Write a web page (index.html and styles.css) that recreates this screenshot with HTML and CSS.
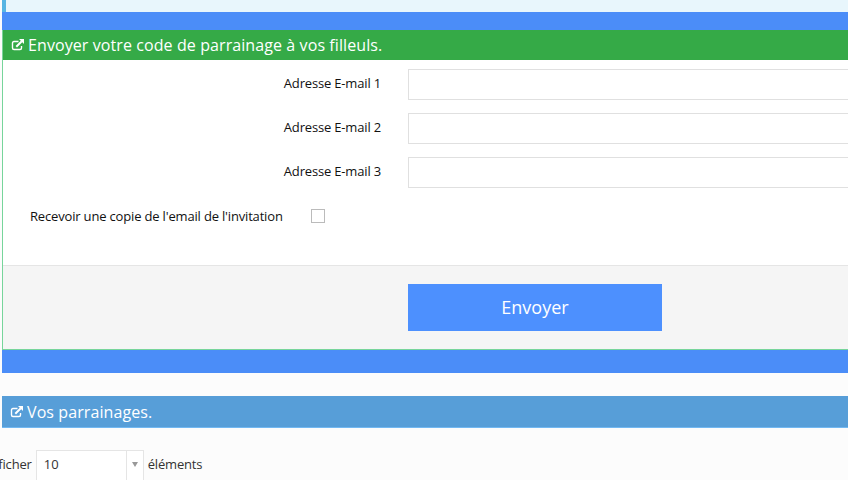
FILE: index.html
```html
<!DOCTYPE html>
<html lang="fr">
<head>
  <meta charset="UTF-8">
  <meta name="viewport" content="width=device-width, initial-scale=1.0">
  <title>Parrainage</title>
  <link rel="stylesheet" href="styles.css">
</head>
<body>
  <div class="page">
    <div class="note"></div>
    <div class="portlet-wrapper">
      <form class="portlet">
        <div class="portlet-title green">
          <svg class="icon" viewBox="0 0 14 14"><path d="M7.5 3.5H3Q1.5 3.5 1.5 5V10Q1.5 11.5 3 11.5H9Q10.5 11.5 10.5 10V8" fill="none" stroke="currentColor" stroke-width="1.4"/><path d="M5.3 8.7L10.8 3.2" stroke="currentColor" stroke-width="2"/><path d="M8 1H13V6Z" fill="currentColor"/></svg>
          <span>Envoyer votre code de parrainage à vos filleuls.</span>
        </div>
        <div class="form-body">
          <div class="form-group">
            <label for="email1">Adresse E-mail 1</label>
            <input type="text" id="email1" class="form-control">
          </div>
          <div class="form-group">
            <label for="email2">Adresse E-mail 2</label>
            <input type="text" id="email2" class="form-control">
          </div>
          <div class="form-group">
            <label for="email3">Adresse E-mail 3</label>
            <input type="text" id="email3" class="form-control">
          </div>
          <div class="form-check">
            <label for="copy">Recevoir une copie de l'email de l'invitation</label>
            <input type="checkbox" id="copy" class="checkbox">
          </div>
        </div>
        <div class="form-actions">
          <button type="submit" class="submit-btn">Envoyer</button>
        </div>
      </form>
    </div>
    <div class="portlet-title blue">
      <svg class="icon" viewBox="0 0 14 14"><path d="M7.5 3.5H3Q1.5 3.5 1.5 5V10Q1.5 11.5 3 11.5H9Q10.5 11.5 10.5 10V8" fill="none" stroke="currentColor" stroke-width="1.4"/><path d="M5.3 8.7L10.8 3.2" stroke="currentColor" stroke-width="2"/><path d="M8 1H13V6Z" fill="currentColor"/></svg>
      <span>Vos parrainages.</span>
    </div>
    <div class="table-length">
      <span class="length-text">Afficher</span>
      <div class="select">
        <span class="select-value">10</span>
        <span class="select-arrow"></span>
      </div>
      <span class="length-text">éléments</span>
    </div>
  </div>
</body>
</html>
```

FILE: styles.css
```css
* {
  box-sizing: border-box;
}
body {
  margin: 0;
  height: 480px;
  overflow: hidden;
  background-color: #fcfcfc;
  font-family: "Open Sans", sans-serif;
  font-size: 13px;
  letter-spacing: -0.17px;
  color: #333;
}
.page {
  margin-left: 2px;
}
.note {
  height: 12px;
  background-color: #e8f6fc;
  border-left: 4px solid #57b5e3;
}
.portlet-wrapper {
  background-color: #4b8df8;
  padding: 18px 0 23px;
  height: 361px;
}
.portlet {
  height: 320px;
  border-left: 1px solid #77d59b;
  border-bottom: 1px solid #77d59b;
  background-color: #fff;
}
.portlet-title {
  display: flex;
  align-items: center;
  color: #fff;
  font-size: 16px;
  letter-spacing: 0.09px;
  white-space: nowrap;
}
.portlet-title.green {
  height: 30px;
  padding-left: 8px;
  background-color: #35aa47;
}
.portlet-title.blue {
  height: 32px;
  margin-top: 23px;
  padding-left: 8px;
  background-color: #579ed8;
  border-bottom: 1px solid #72b8f2;
}
.icon {
  width: 14px;
  height: 14px;
  margin-right: 3px;
}
.form-body {
  height: 205px;
  padding-top: 9px;
}
.form-group {
  display: flex;
  height: 31px;
  margin-bottom: 13px;
}
.form-group label {
  width: 378px;
  margin-right: 27px;
  padding-top: 5px;
  text-align: right;
  color: #111;
}
.form-control {
  flex: 1;
  border: 1px solid #e0e0e0;
  border-right: 0;
  background-color: #fff;
}
.form-check {
  display: flex;
  align-items: center;
  height: 29px;
  padding-left: 27px;
  color: #111;
}
.form-check label {
  width: 281px;
}
.checkbox {
  appearance: none;
  width: 14px;
  height: 14px;
  margin: 0;
  border: 1px solid #bbb;
  background-color: #fff;
}
.form-actions {
  height: 84px;
  padding: 18px 0 0 405px;
  background-color: #f5f5f5;
  border-top: 1px solid #e5e5e5;
}
.submit-btn {
  display: block;
  width: 254px;
  height: 47px;
  padding: 0 0 2px;
  border: 0;
  background-color: #4d90fe;
  color: #fff;
  font-family: inherit;
  font-size: 18px;
}
.table-length {
  display: flex;
  align-items: center;
  gap: 4px;
  height: 30px;
  margin: 22px 0 0 -16px;
}
.length-text {
  padding-bottom: 2px;
}
.select {
  display: flex;
  width: 108px;
  height: 30px;
  border: 1px solid #e5e5e5;
  border-bottom: 0;
  background-color: #fff;
}
.select-value {
  flex: 1;
  padding: 4px 0 0 7px;
  letter-spacing: 0;
}
.select-arrow {
  display: flex;
  justify-content: center;
  width: 17px;
  padding-top: 11px;
  border-left: 1px solid #e5e5e5;
}
.select-arrow::before {
  content: "";
  width: 0;
  height: 0;
  border: 3px solid transparent;
  border-top: 5px solid #999;
  border-bottom: 0;
}
```
